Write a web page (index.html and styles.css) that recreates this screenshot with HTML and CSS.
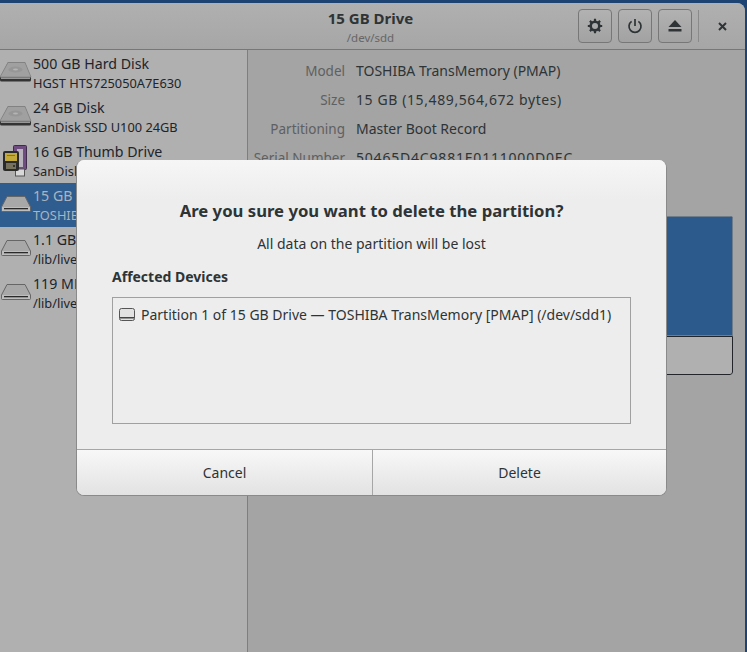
FILE: index.html
```html
<!DOCTYPE html>
<html lang="en">
<head>
    <meta charset="UTF-8">
    <title>Disks</title>
    <link rel="stylesheet" href="styles.css">
</head>
<body>
    <svg class="defs" width="0" height="0">
        <symbol id="disco" viewBox="0 0 32 20">
            <path d="M8 0h17l6 15v3H0v-3z" fill="#777"/>
            <path d="M8 .5h17L31 15H0z" fill="#a0a0a0" stroke="#7c7c7c" stroke-width=".6"/>
            <rect x="0" y="15" width="31" height="4.500" rx="1.500" fill="#333"/>
            <rect x="1" y="15.500" width="29" height="1.200" fill="#c4c4c4"/>
            <ellipse cx="15.500" cy="7.500" rx="7" ry="3" fill="#969696"/>
            <ellipse cx="15.500" cy="7.500" rx="2.500" ry="1" fill="#b4b4b4"/>
        </symbol>
        <symbol id="removivel" viewBox="0 0 30 16">
            <path d="M6 .5h18L29.500 11v3.500a1 1 0 0 1-1 1h-27a1 1 0 0 1-1-1V11z" fill="#a8a8a8" stroke="#666"/>
            <rect x="1" y="11" width="28" height="4" fill="#bdbdbd"/>
            <rect x="3" y="12" width="24" height="1.300" fill="#2a2a2a"/>
        </symbol>
    </svg>

    <div class="janela">
        <header class="topo">
            <div class="titulo">
                <strong>15 GB Drive</strong>
                <span>/dev/sdd</span>
            </div>
            <div class="acoes">
                <button class="botao">
                    <svg width="16" height="16" viewBox="0 0 16 16"><circle cx="8" cy="8" r="4.300" fill="none" stroke="#2e3436" stroke-width="2.600"/><path d="M8 .8v3M8 12.200v3M.8 8h3M12.200 8h3M2.900 2.900l2.100 2.100M11 11l2.100 2.100M2.900 13.100L5 11M11 5l2.100-2.100" stroke="#2e3436" stroke-width="2.200"/></svg>
                </button>
                <button class="botao">
                    <svg width="16" height="16" viewBox="0 0 16 16"><path d="M4.600 3.400a6 6 0 1 0 6.800 0M8 1v7" fill="none" stroke="#2e3436" stroke-width="1.700"/></svg>
                </button>
                <button class="botao">
                    <svg width="14" height="12" viewBox="0 0 14 12"><path d="M7 0l6.500 7H.5z" fill="#2e3436"/><rect x="0.500" y="9" width="13" height="2.500" fill="#2e3436"/></svg>
                </button>
                <span class="separador"></span>
                <button class="fechar">
                    <svg width="9" height="9" viewBox="0 0 9 9"><path d="M1 1l7 7M8 1L1 8" stroke="#2e3436" stroke-width="2"/></svg>
                </button>
            </div>
        </header>

        <div class="corpo">
            <aside class="lateral">
                <div class="disco">
                    <svg class="icone fixo" width="32" height="20"><use href="#disco"/></svg>
                    <div><p class="nome">500 GB Hard Disk</p><p class="sub">HGST HTS725050A7E630</p></div>
                </div>
                <div class="disco">
                    <svg class="icone fixo" width="32" height="20"><use href="#disco"/></svg>
                    <div><p class="nome">24 GB Disk</p><p class="sub">SanDisk SSD U100 24GB</p></div>
                </div>
                <div class="disco">
                    <svg class="icone" width="32" height="32" viewBox="0 0 32 32">
                        <rect x="13.500" y=".5" width="13" height="24" rx="1" fill="#6f4d80" stroke="#3f2c4a"/>
                        <rect x="17" y="4" width="6" height="18" fill="#b9b3bd"/>
                        <rect x="15.500" y="24" width="9" height="7" fill="#d8d8d8" stroke="#555"/>
                        <rect x="3" y="6" width="16" height="20" rx="2" fill="#2b2b2b"/>
                        <rect x="5" y="8" width="12" height="8" fill="#c2a93a"/>
                        <rect x="7" y="10" width="8" height="1" fill="#8a7720"/>
                        <rect x="6" y="18" width="10" height="6" fill="#77725c"/>
                        <circle cx="14" cy="21" r="1" fill="#222"/>
                    </svg>
                    <div><p class="nome">16 GB Thumb Drive</p><p class="sub">SanDisk Cruzer</p></div>
                </div>
                <div class="disco ativo">
                    <svg class="icone movel" width="32" height="16"><use href="#removivel"/></svg>
                    <div><p class="nome">15 GB Drive</p><p class="sub">TOSHIBA TransMemory</p></div>
                </div>
                <div class="disco">
                    <svg class="icone movel" width="32" height="16"><use href="#removivel"/></svg>
                    <div><p class="nome">1.1 GB Loop</p><p class="sub">/lib/live/mount</p></div>
                </div>
                <div class="disco">
                    <svg class="icone movel" width="32" height="16"><use href="#removivel"/></svg>
                    <div><p class="nome">119 MB</p><p class="sub">/lib/live/mount</p></div>
                </div>
            </aside>

            <main class="detalhes">
                <dl class="info">
                    <dt>Model</dt><dd>TOSHIBA TransMemory (PMAP)</dd>
                    <dt>Size</dt><dd class="tamanho">15 GB (15,489,564,672 bytes)</dd>
                    <dt>Partitioning</dt><dd>Master Boot Record</dd>
                    <dt>Serial Number</dt><dd class="serial">50465D4C9881E0111000D0EC</dd>
                </dl>
                <div class="volumes">
                    <div class="volume"></div>
                    <div class="livre"></div>
                </div>
            </main>
        </div>
    </div>

    <section class="dialogo">
        <div class="conteudo">
            <h1>Are you sure you want to delete the partition?</h1>
            <p class="aviso">All data on the partition will be lost</p>
            <h2>Affected Devices</h2>
            <div class="lista">
                <svg width="16" height="14" viewBox="0 0 16 14"><rect x=".5" y=".5" width="15" height="12" rx="2" fill="#e2e2e2" stroke="#555"/><rect x="1" y="9" width="14" height="1.500" fill="#444"/></svg>
                <span>Partition 1 of 15 GB Drive — TOSHIBA TransMemory [PMAP] (/dev/sdd1)</span>
            </div>
        </div>
        <div class="rodape">
            <button>Cancel</button>
            <button>Delete</button>
        </div>
    </section>
</body>
</html>
```

FILE: styles.css
```css
*{
    box-sizing: border-box;
}

html, body{
    height: 100%;
}

body{
    margin: 0;
    padding: 3px 2px 0 0;
    background-color: #1d4373;
    color: #2e3436;
    font-family: "Noto Sans", sans-serif;
    font-size: 14px;
    overflow: hidden;
}

p, h1, h2, dl, dd{
    margin: 0;
}

button{
    font-family: inherit;
}

.defs{
    position: absolute;
}

.janela{
    display: flex;
    flex-direction: column;
    height: 100%;
    border-top-right-radius: 8px;
    overflow: hidden;
    background-color: #a4a4a4;
}

.topo{
    display: flex;
    align-items: center;
    justify-content: flex-end;
    position: relative;
    height: 47px;
    padding-right: 8px;
    background: linear-gradient(#b0b0b0, #a6a6a6);
    border-bottom: 1px solid #777;
}

.titulo{
    position: absolute;
    left: 0;
    right: 4px;
    top: 6px;
    display: flex;
    flex-direction: column;
    align-items: center;
    line-height: 19px;
}

.titulo strong{
    font-size: 15px;
    font-weight: 700;
}

.titulo span{
    font-size: 11.500px;
    color: #666;
}

.acoes{
    display: flex;
    align-items: center;
    gap: 6px;
}

.botao{
    display: flex;
    align-items: center;
    justify-content: center;
    width: 34px;
    height: 34px;
    padding: 0;
    background: linear-gradient(#b2b2b2, #a2a2a2);
    border: 1px solid #777;
    border-radius: 4px;
}

.separador{
    width: 1px;
    height: 32px;
    background-color: #8a8a8a;
}

.fechar{
    display: flex;
    align-items: center;
    justify-content: center;
    width: 30px;
    height: 32px;
    margin-left: 2px;
    padding: 0;
    background: none;
    border: 0;
}

.corpo{
    display: flex;
    flex: 1;
}

.lateral{
    width: 248px;
    padding-top: 1px;
    background-color: #b0b0b0;
    border-right: 1px solid #7e7e7e;
}

.disco{
    display: flex;
    align-items: center;
    gap: 1px;
    height: 44px;
}

.icone{
    flex-shrink: 0;
}

.fixo{
    margin-top: -3px;
}

.movel{
    margin-top: -2px;
}

.nome{
    font-size: 14.200px;
    line-height: 20px;
    color: #20242a;
    white-space: nowrap;
}

.sub{
    font-size: 12.800px;
    line-height: 18px;
    color: #20242a;
    white-space: nowrap;
}

.ativo{
    background-color: #2f5d8f;
}

.ativo .nome, .ativo .sub{
    color: #a9b4c0;
}

.detalhes{
    flex: 1;
    padding: 6px 12px 0 0;
}

.info{
    display: grid;
    grid-template-columns: 97px 1fr;
    grid-auto-rows: 29px;
    align-items: center;
    column-gap: 11px;
}

.info dt{
    font-size: 13.500px;
    text-align: right;
    color: #5e6061;
}

.tamanho{
    letter-spacing: .6px;
}

.serial{
    letter-spacing: .8px;
}

.volumes{
    margin-top: 44px;
    height: 159px;
    margin-left: 16px;
    display: flex;
    flex-direction: column;
    border-radius: 3px;
    overflow: hidden;
}

.volume{
    height: 120px;
    background-color: #2c5a8c;
    border: 1px solid #6f7c8a;
}

.livre{
    flex: 1;
    background-color: #b0b0b0;
    border: 1px solid #22262a;
    border-radius: 0 0 3px 3px;
}

.dialogo{
    position: absolute;
    left: 76px;
    top: 160px;
    width: 591px;
    height: 336px;
    display: flex;
    flex-direction: column;
    background-color: #ededed;
    border: 1px solid #8a8a8a;
    border-top: 0;
    border-radius: 8px;
    overflow: hidden;
}

.conteudo{
    flex: 1;
    padding: 39px 35px 25px;
    background: linear-gradient(#f6f6f6, #ededed 40px);
}

h1{
    font-size: 16.700px;
    line-height: 24px;
    font-weight: 700;
    text-align: center;
}

.aviso{
    margin-top: 11px;
    text-align: center;
    line-height: 20px;
}

h2{
    margin-top: 13px;
    font-size: 14px;
    line-height: 20px;
    font-weight: 700;
}

.lista{
    display: flex;
    align-items: flex-start;
    gap: 6px;
    height: 127px;
    margin-top: 10px;
    padding: 7px 6px;
    border: 1px solid #a0a0a0;
    line-height: 20px;
}

.lista svg{
    margin-top: 3px;
}

.rodape{
    display: grid;
    grid-template-columns: 295px 1fr;
    height: 46px;
    border-top: 1px solid #a6a6a6;
}

.rodape button{
    background: linear-gradient(#f8f8f8, #e2e2e2);
    border: 0;
    color: #2e3436;
    font-size: 14px;
}

.rodape button + button{
    border-left: 1px solid #a6a6a6;
}
```
